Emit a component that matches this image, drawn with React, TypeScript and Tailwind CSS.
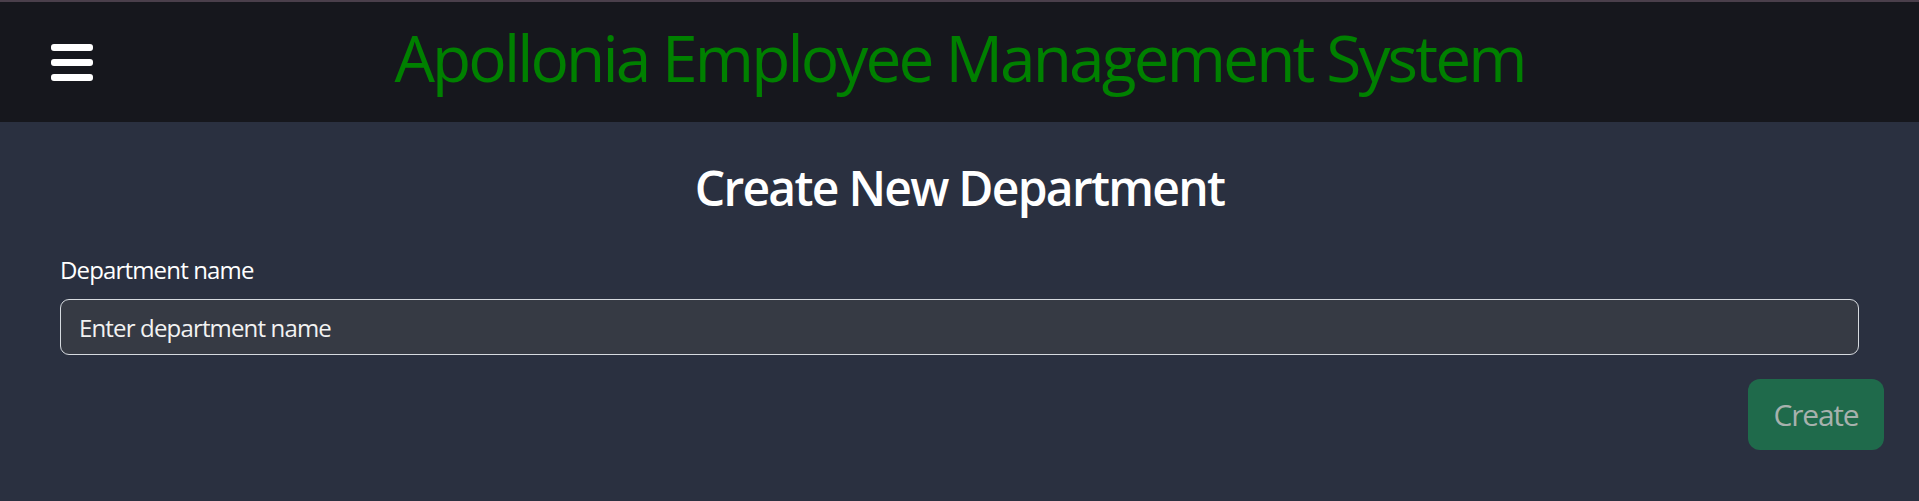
import { useState } from "react";

const Hamburger = () => (
    <button className="flex flex-col gap-[8px] w-[42px] ml-[51px]">
        <span className="block h-[7px] w-full rounded-[3px] bg-white" />
        <span className="block h-[7px] w-full rounded-[3px] bg-white" />
        <span className="block h-[7px] w-full rounded-[3px] bg-white" />
    </button>
);

const App = () => {
    const [name, setName] = useState("");

    return (
        <div className="min-h-screen bg-[#2a3040] border-t-2 border-[#4a3f4b] font-['Open_Sans',sans-serif]">
            <header className="h-[120px] bg-[#16171d] grid grid-cols-[1fr_auto_1fr] items-center">
                <Hamburger />
                <h1 className="self-start pt-[24px] text-[64px] leading-[64px] font-medium text-[#008000] tracking-[-0.045em]">
                    Apollonia Employee Management System
                </h1>
                <div />
            </header>

            <main className="pt-[37px]">
                <h2 className="text-center text-[48px] leading-[58px] font-semibold text-white tracking-[-0.036em]">
                    Create New Department
                </h2>

                <form className="mt-[35px]" onSubmit={(e) => e.preventDefault()}>
                    <div className="mx-[60px]">
                        <label className="block text-[24px] leading-[36px] text-white mb-[11px] tracking-[-0.035em]">
                            Department name
                        </label>
                        <input
                            value={name}
                            onChange={(e) => setName(e.target.value)}
                            placeholder="Enter department name"
                            className="w-full h-[56px] px-[18px] text-[24px] leading-[36px] tracking-[-0.035em] text-white placeholder:text-[#f2f2f2] bg-[#363a44] border-[1.5px] border-[#d6dadf] rounded-[9px] outline-none"
                        />
                    </div>
                    <div className="flex justify-end mr-[35px] mt-[24px]">
                        <button
                            disabled={!name}
                            className="w-[136px] h-[71px] rounded-[12px] bg-[#1f6a4b] text-[30px] tracking-[-0.04em] text-[#a7b1ad]"
                        >
                            Create
                        </button>
                    </div>
                </form>
            </main>
        </div>
    );
};

export default App;
